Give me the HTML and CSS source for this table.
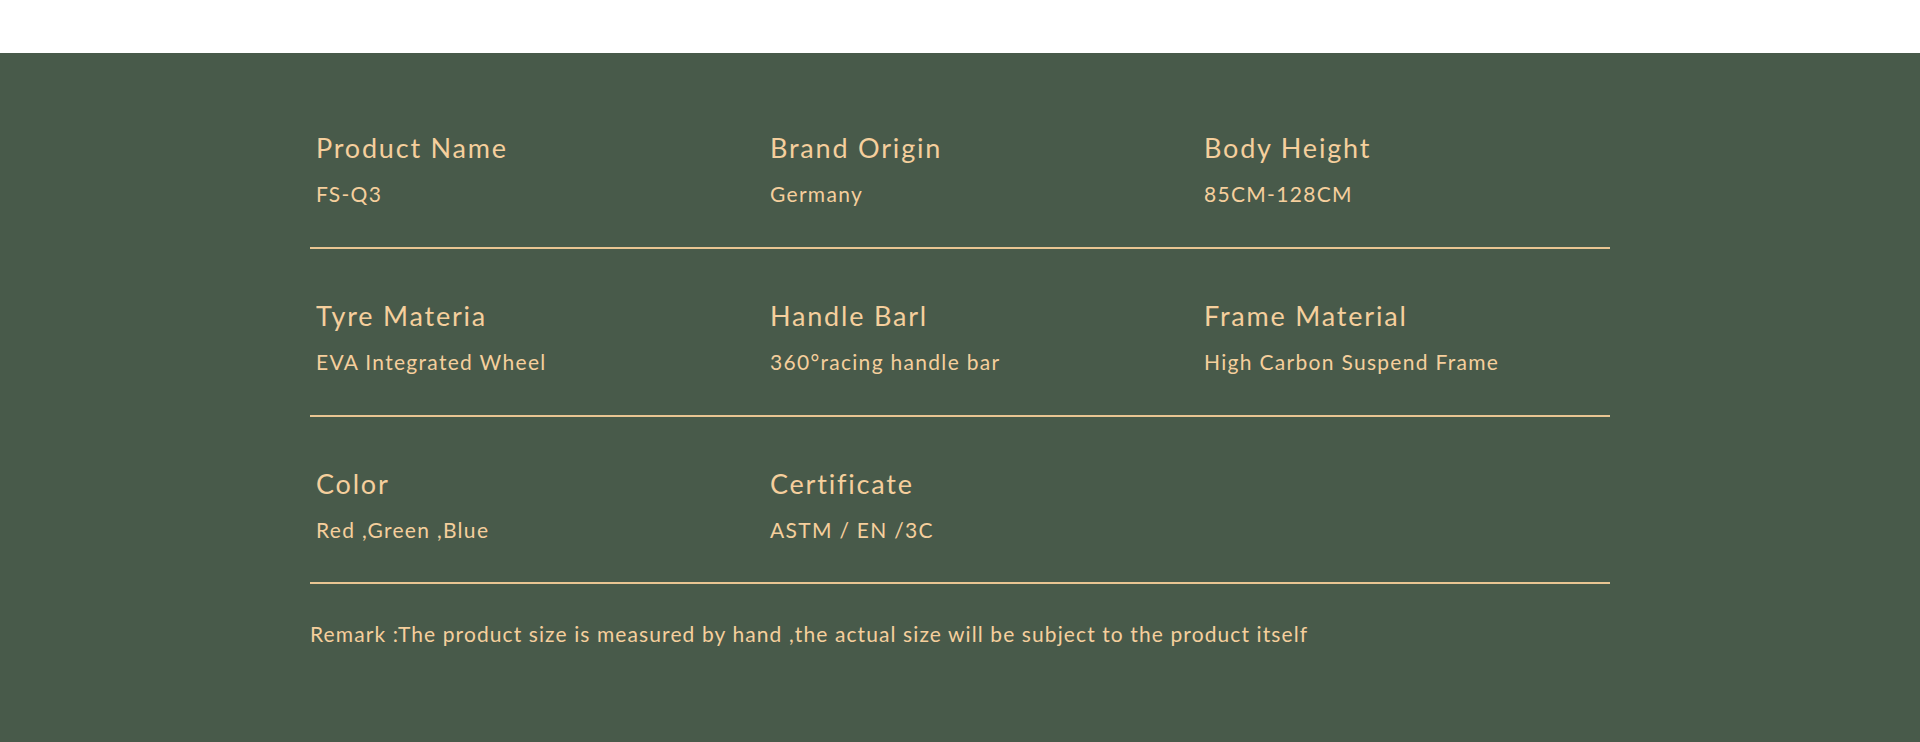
FILE: index.html
```html
<!DOCTYPE html>
<html lang="en">
<head>
    <meta charset="UTF-8">
    <meta name="viewport" content="width=device-width, initial-scale=1.0">
    <title>Product Parameters</title>
    <link rel="stylesheet" href="styles.css">
</head>
<body>

<div class="top-space"></div>

<section class="params">
    <div class="params-inner">
        <div class="param-row">
            <div class="param">
                <h3>Product Name</h3>
                <p>FS-Q3</p>
            </div>
            <div class="param">
                <h3>Brand Origin</h3>
                <p>Germany</p>
            </div>
            <div class="param">
                <h3>Body Height</h3>
                <p>85CM-128CM</p>
            </div>
        </div>

        <div class="param-row">
            <div class="param">
                <h3>Tyre Materia</h3>
                <p>EVA Integrated Wheel</p>
            </div>
            <div class="param">
                <h3>Handle Barl</h3>
                <p>360°racing handle bar</p>
            </div>
            <div class="param">
                <h3>Frame Material</h3>
                <p>High Carbon Suspend Frame</p>
            </div>
        </div>

        <div class="param-row">
            <div class="param">
                <h3>Color</h3>
                <p>Red ,Green ,Blue</p>
            </div>
            <div class="param">
                <h3>Certificate</h3>
                <p>ASTM / EN /3C</p>
            </div>
        </div>

        <p class="remark">Remark :The product size is measured by hand ,the actual size will be subject to the product itself</p>
    </div>
</section>

</body>
</html>
```

FILE: styles.css
```css
body {
    margin: 0;
    font-family: Lato, "Noto Sans", sans-serif;
    background-color: #fff;
}
.top-space {
    height: 53px;
}
.params {
    background-color: #485a4a;
    color: #f5cf9d;
    height: 689px;
    padding-top: 28px;
    box-sizing: border-box;
}
.params-inner {
    width: 1300px;
    margin: 0 auto;
}
.param-row {
    display: grid;
    grid-template-columns: 454px 434px 1fr;
    padding: 52px 0 40px;
    border-bottom: 2px solid #e9c593;
}
.param-row:last-of-type {
    padding-bottom: 39px;
}
.param {
    padding-left: 6px;
}
.param h3 {
    margin: 0;
    font-size: 27px;
    line-height: 30px;
    font-weight: 400;
    letter-spacing: 1.8px;
}
.param p {
    margin: 18px 0 0;
    font-size: 21px;
    line-height: 26px;
    letter-spacing: 1.3px;
}
.remark {
    margin: 37px 0 0;
    font-size: 21px;
    line-height: 26px;
    letter-spacing: 1.1px;
}
```
